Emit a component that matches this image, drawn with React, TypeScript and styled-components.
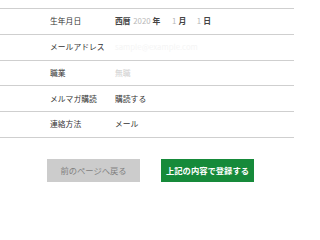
import React from "react";
import styled, { createGlobalStyle } from "styled-components";

const Global = createGlobalStyle`
  html, body { margin: 0; padding: 0; background: #fff; }
  body { font-family: "Noto Sans CJK JP", "Noto Sans", sans-serif; color: #333; }
`;

const Page = styled.div`
  width: 294px;
  padding-top: 8px;
`;

const Table = styled.div`
  border-top: 1px solid #cfcfcf;
`;

const Row = styled.div`
  display: grid;
  grid-template-columns: 50px 65px 1fr;
  align-items: center;
  height: 24.75px;
  border-bottom: 1px solid #cfcfcf;
  font-size: 7.8px;
  line-height: 1;
`;

const Label = styled.div`
  grid-column: 2;
  color: #333;
  white-space: nowrap;
`;

const Value = styled.div<{ $tone?: "muted" | "faint" }>`
  grid-column: 3;
  color: ${(p) => (p.$tone === "muted" ? "#cfcfcf" : p.$tone === "faint" ? "#f5f5f5" : "#333")};
  white-space: nowrap;
  display: flex;
  align-items: baseline;
`;

const Strong = styled.span`
  font-weight: 700;
  color: #444;
`;

const Field = styled.span<{ $w: number }>`
  display: inline-block;
  width: ${(p) => p.$w}px;
  text-align: right;
  color: #b8b8b8;
  padding-right: 2px;
`;

const Buttons = styled.div`
  display: flex;
  justify-content: center;
  gap: 21px;
  margin-top: 21px;
  padding-left: 7px;
`;

const Button = styled.button<{ $primary?: boolean }>`
  width: 93px;
  height: 23px;
  border: none;
  padding: 0;
  font-family: "Noto Sans CJK JP", sans-serif;
  font-size: 8.3px;
  font-weight: ${(p) => (p.$primary ? 700 : 400)};
  background: ${(p) => (p.$primary ? "#168a3a" : "#cccccc")};
  color: ${(p) => (p.$primary ? "#fff" : "#808080")};
`;

export default function App() {
  return (
    <>
      <Global />
      <Page>
        <Table>
          <Row>
            <Label>生年月日</Label>
            <Value>
              <Strong>西暦</Strong>
              <Field $w={20}>2020</Field>
              <Strong>年</Strong>
              <Field $w={16}>1</Field>
              <Strong>月</Strong>
              <Field $w={15}>1</Field>
              <Strong>日</Strong>
            </Value>
          </Row>
          <Row>
            <Label>メールアドレス</Label>
            <Value $tone="faint">sample@example.com</Value>
          </Row>
          <Row>
            <Label>職業</Label>
            <Value $tone="muted">無職</Value>
          </Row>
          <Row>
            <Label>メルマガ購読</Label>
            <Value>購読する</Value>
          </Row>
          <Row>
            <Label>連絡方法</Label>
            <Value>メール</Value>
          </Row>
        </Table>
        <Buttons>
          <Button>前のページへ戻る</Button>
          <Button $primary>上記の内容で登録する</Button>
        </Buttons>
      </Page>
    </>
  );
}
